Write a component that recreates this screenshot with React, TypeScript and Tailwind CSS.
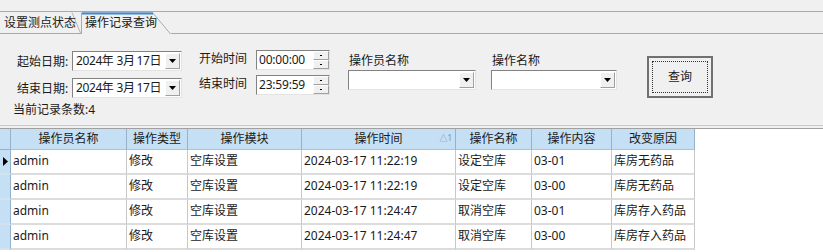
import React from "react"

const font = { fontFamily: '"Noto Sans", "Noto Sans CJK SC", sans-serif' }

const cols = [
    { t: "操作员名称", w: 116 },
    { t: "操作类型", w: 61 },
    { t: "操作模块", w: 114 },
    { t: "操作时间", w: 154, sort: true },
    { t: "操作名称", w: 76 },
    { t: "操作内容", w: 80 },
    { t: "改变原因", w: 83 },
]

const rows = [
    ["admin", "修改", "空库设置", "2024-03-17 11:22:19", "设定空库", "03-01", "库房无药品"],
    ["admin", "修改", "空库设置", "2024-03-17 11:22:19", "设定空库", "03-00", "库房无药品"],
    ["admin", "修改", "空库设置", "2024-03-17 11:24:47", "取消空库", "03-01", "库房存入药品"],
    ["admin", "修改", "空库设置", "2024-03-17 11:24:47", "取消空库", "03-00", "库房存入药品"],
]

const DropBtn = () => (
    <div className="w-[15px] h-[16px] mr-[1px] bg-[#f0f0f0] border border-t-white border-l-white border-r-[#a0a0a0] border-b-[#a0a0a0] flex items-center justify-center">
        <svg width="7" height="4" viewBox="0 0 7 4">
            <path d="M0 0 H7 L3.5 4 Z" fill="#000" />
        </svg>
    </div>
)

const DateBox = () => (
    <div className="w-[110px] h-[20px] bg-white border border-t-[#828282] border-l-[#828282] border-r-[#e3e3e3] border-b-[#e3e3e3] flex items-center">
        <span className="flex-1 pl-[3px] text-[12px] leading-none whitespace-nowrap tracking-[-0.4px]">
            2024年<span className="inline-block w-[3px]" />3月<span className="inline-block w-[2px]" />17日
        </span>
        <DropBtn />
    </div>
)

const TimeBox = ({ text }: { text: string }) => (
    <div className="w-[74px] h-[20px] bg-white border border-t-[#828282] border-l-[#828282] border-r-[#e3e3e3] border-b-[#e3e3e3] flex items-center">
        <span className="flex-1 pl-[2px] text-[12px] leading-none tracking-[-0.2px]">{text}</span>
        <div className="w-[16px] h-[18px] flex flex-col">
            <div className="flex-1 bg-[#f0f0f0] border border-t-white border-l-white border-r-[#a0a0a0] border-b-[#a0a0a0] flex items-center justify-center">
                <div className="w-[2px] h-[1px] bg-black" />
            </div>
            <div className="flex-1 bg-[#f0f0f0] border border-t-white border-l-white border-r-[#a0a0a0] border-b-[#a0a0a0] flex items-center justify-center">
                <div className="w-[2px] h-[1px] bg-black" />
            </div>
        </div>
    </div>
)

const Combo = ({ w }: { w: number }) => (
    <div
        className="h-[20px] bg-white border border-t-[#828282] border-l-[#828282] border-r-[#e3e3e3] border-b-[#e3e3e3] flex items-center justify-end"
        style={{ width: w }}
    >
        <DropBtn />
    </div>
)

export default function App() {
    return (
        <div className="w-[823px] h-[252px] bg-[#f0f0f0] text-[#1a1a1a] overflow-hidden" style={font}>
            {/* tabs */}
            <div className="h-[12px] border-b border-[#a9a9a9]" />
            <div className="h-[22px] flex items-end border-b border-[#a9a9a9] relative">
                <div className="h-[21px] w-[81px] relative flex items-center pl-[4px] text-[12px]">
                    <svg className="absolute inset-0" width="81" height="21" viewBox="0 0 81 21">
                        <path d="M72 0.5 L80.5 21" fill="none" stroke="#b5b5b5" />
                    </svg>
                    <span className="relative">设置测点状态</span>
                </div>
                <div className="h-[22px] w-[90px] relative flex items-center pl-[4px] text-[12px] -mb-[1px] bg-[#f0f0f0]">
                    <svg className="absolute inset-0" width="90" height="22" viewBox="0 0 90 22">
                        <path d="M0.5 22 V1 H72 L89.5 22" fill="none" stroke="#a9a9a9" />
                        <path d="M1 1.5 H72" stroke="#3c8ad6" strokeWidth="2" />
                    </svg>
                    <span className="relative">操作记录查询</span>
                </div>
            </div>

            {/* query panel */}
            <div className="h-[92px] border-b border-[#c8c8c8] text-[12px]">
                <div className="flex items-start">
                    <div className="ml-[17px] mt-[16px] flex flex-col gap-[6px]">
                        <div className="flex items-center">
                            <span className="w-[55px] mt-[3px]">起始日期:</span>
                            <DateBox />
                        </div>
                        <div className="flex items-center">
                            <span className="w-[55px] mt-[3px]">结束日期:</span>
                            <DateBox />
                        </div>
                    </div>
                    <div className="ml-[17px] mt-[16px] flex flex-col gap-[5px]">
                        <div className="flex items-center">
                            <span className="w-[57px] -mt-[2px]">开始时间</span>
                            <TimeBox text="00:00:00" />
                        </div>
                        <div className="flex items-center">
                            <span className="w-[57px] -mt-[2px]">结束时间</span>
                            <TimeBox text="23:59:59" />
                        </div>
                    </div>
                    <div className="ml-[18px] mt-[18px] flex flex-col gap-[1px]">
                        <span className="pl-[1px] leading-[17px]">操作员名称</span>
                        <Combo w={128} />
                    </div>
                    <div className="ml-[15px] mt-[18px] flex flex-col gap-[1px]">
                        <span className="pl-[1px] leading-[17px]">操作名称</span>
                        <Combo w={126} />
                    </div>
                    <div className="ml-[30px] mt-[22px] w-[66px] h-[42px] border-2 border-[#707070] bg-[#f0f0f0] p-[3px]">
                        <div className="w-full h-full border border-dotted border-[#333] flex items-center justify-center">
                            查询
                        </div>
                    </div>
                </div>
                <div className="ml-[13px] mt-[4px] leading-[16px]">当前记录条数:4</div>
            </div>

            {/* grid */}
            <div className="mt-[2px] bg-white h-[130px] border-t border-[#a0a0a0] text-[12px]">
                <div className="flex h-[21px]">
                    <div className="w-[11px] bg-[#c5dff5] border-r border-b border-[#95b2cc]" />
                    {cols.map((c) => (
                        <div
                            key={c.t}
                            className="relative flex items-center justify-center bg-[#c5dff5] border-r border-b border-r-[#95b2cc] border-b-[#a7c3dc]"
                            style={{ width: c.w }}
                        >
                            {c.t}
                            {c.sort && (
                                <span className="absolute right-[3px] top-[5px] text-[8px] text-[#7a93a8] leading-none">△1</span>
                            )}
                        </div>
                    ))}
                </div>
                {rows.map((r, i) => (
                    <div key={i} className="flex h-[25px]">
                        <div className="w-[11px] bg-[#c5dff5] border-r border-b-2 border-r-[#95b2cc] border-b-[#d4e2ee] flex items-start pt-[7px] justify-center">
                            {i === 0 && (
                                <svg width="5" height="9" viewBox="0 0 5 9">
                                    <path d="M0 0 L5 4.5 L0 9 Z" fill="#000" />
                                </svg>
                            )}
                        </div>
                        {r.map((v, j) => (
                            <div
                                key={j}
                                className="border-r border-b-2 border-r-[#c8c8c8] border-b-[#dcdcdc] pl-[2px] pt-[2px] leading-[17px] whitespace-nowrap overflow-hidden"
                                style={{ width: cols[j].w }}
                            >
                                {v}
                            </div>
                        ))}
                    </div>
                ))}
            </div>
        </div>
    )
}
